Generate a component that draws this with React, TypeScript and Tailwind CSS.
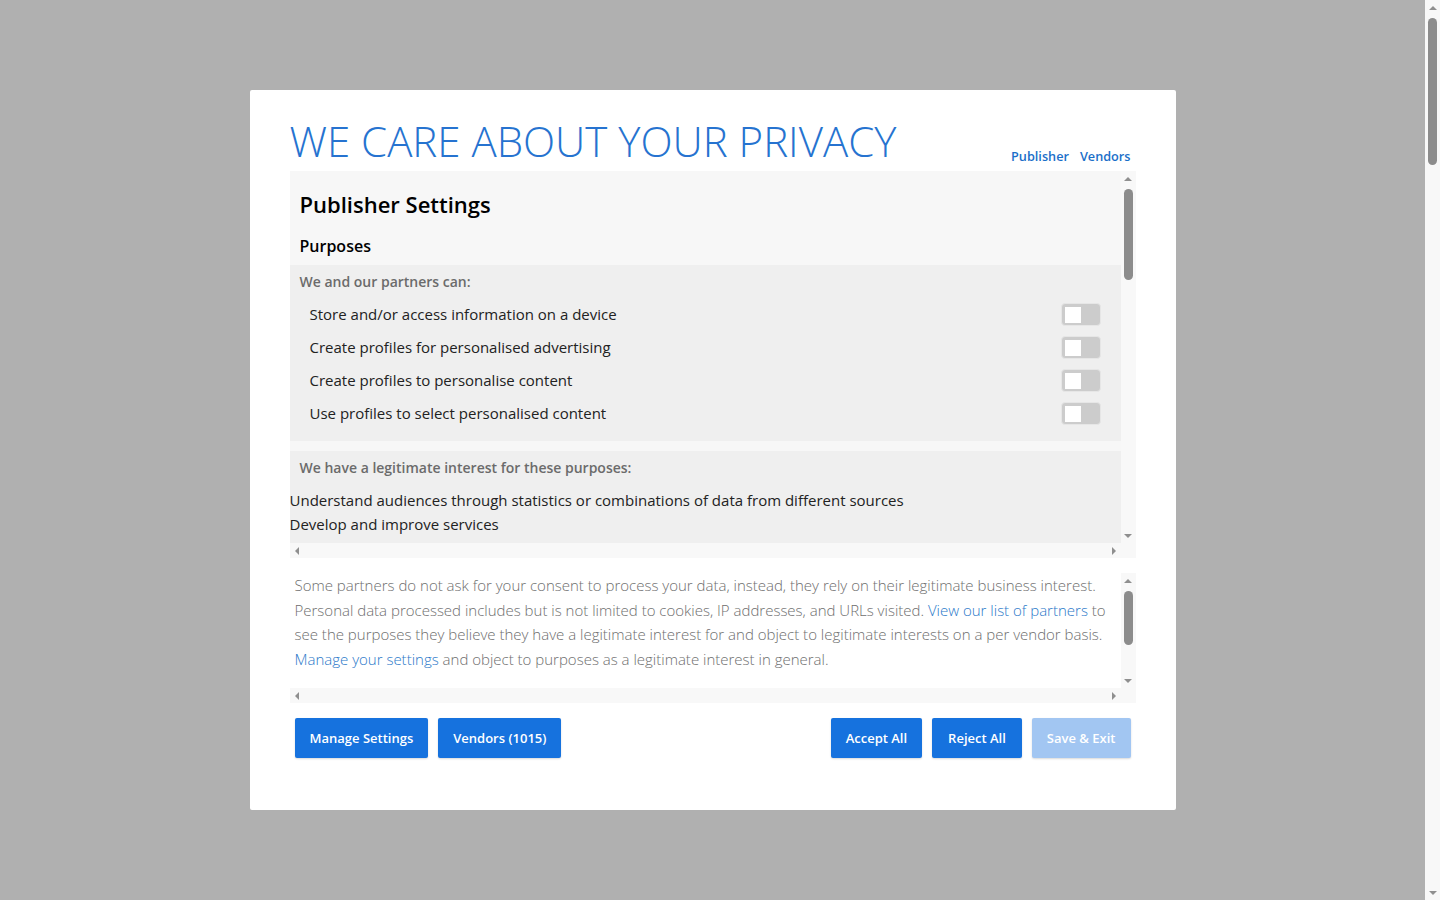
import React from 'react';

const purposes = [
  'Store and/or access information on a device',
  'Create profiles for personalised advertising',
  'Create profiles to personalise content',
  'Use profiles to select personalised content',
];

const legitimate = [
  'Understand audiences through statistics or combinations of data from different sources',
  'Develop and improve services',
  'Use limited data to select advertising',
  'Measure advertising performance',
  'Measure content performance',
];

// small scrollbar arrow triangle
const Arrow = ({ dir }: { dir: 'up' | 'down' | 'left' | 'right' }) => {
  const pts = {
    up: '0,4 4,0 8,4',
    down: '0,0 8,0 4,4',
    left: '4,0 4,8 0,4',
    right: '0,0 0,8 4,4',
  }[dir];
  const vert = dir === 'up' || dir === 'down';
  return (
    <svg width={vert ? 8 : 4} height={vert ? 4 : 8} viewBox={vert ? '0 0 8 4' : '0 0 4 8'}>
      <polygon points={pts} fill="#8f8f8f" />
    </svg>
  );
};

const VScroll = ({ top, size }: { top: number; size: number }) => (
  <div className="w-[15px] shrink-0 bg-[#f8f8f8] flex flex-col items-center">
    <div className="h-[15px] flex items-center justify-center">
      <Arrow dir="up" />
    </div>
    <div className="flex-1 w-full flex flex-col items-center">
      <div className="w-[9px] rounded-full bg-[#8c8c8c]" style={{ marginTop: top, height: size }} />
    </div>
    <div className="h-[15px] flex items-center justify-center">
      <Arrow dir="down" />
    </div>
  </div>
);

const HScroll = () => (
  <div className="h-[15px] flex shrink-0">
    <div className="flex-1 bg-[#f8f8f8] flex items-center justify-between px-[5px]">
      <Arrow dir="left" />
      <Arrow dir="right" />
    </div>
    <div className="w-[15px] bg-[#f8f8f8]" />
  </div>
);

const Toggle = () => (
  <div className="w-[40px] h-[23px] rounded-[4px] bg-[#cccccc] border border-[#e6e6e6] flex items-center pl-[3px]">
    <div className="w-[16px] h-[16px] bg-white" />
  </div>
);

const Btn = ({ label, disabled, wide }: { label: string; disabled?: boolean; wide?: boolean }) => (
  <button
    className={
      'h-[40px] pt-[2px] rounded-[2px] text-[13px] font-semibold text-white shadow-[0_1px_2px_rgba(0,0,0,0.15)] ' +
      (wide ? 'px-[16px] ' : 'px-[15px] ') +
      (disabled ? 'bg-[#a2c6f2]' : 'bg-[#1672de]')
    }
  >
    {label}
  </button>
);

export default function App() {
  return (
    <div className="h-[900px] flex overflow-hidden font-['Open_Sans',sans-serif]">
      <div className="flex-1 bg-[#b0b0b0] flex items-center justify-center">
        <div className="w-[926px] h-[720px] bg-white rounded-[2px] px-[40px] pt-[27px]">
          {/* Header */}
          <div className="flex items-end justify-between mb-[6px]">
            <h1 className="text-[42px] leading-[48px] font-light text-[#2673d0] whitespace-nowrap">
              WE CARE ABOUT YOUR PRIVACY
            </h1>
            <div className="flex gap-[11px] text-[12.7px] font-semibold text-[#1a6fc9] pr-[5px] mb-[-1px]">
              <a>Publisher</a>
              <a>Vendors</a>
            </div>
          </div>

          {/* Publisher settings */}
          <div className="h-[387px] flex flex-col bg-[#f7f7f7]">
            <div className="flex flex-1 min-h-0">
              <div className="flex-1 overflow-hidden">
                <h2 className="text-[22px] leading-[30px] font-semibold text-black pl-[10px] pt-[18px]">
                  Publisher Settings
                </h2>
                <h3 className="text-[16px] leading-[24px] font-semibold text-black pl-[10px] mt-[15px] mb-[7px]">
                  Purposes
                </h3>
                <div className="bg-[#efefef] pt-[7px] pb-[11px]">
                  <p className="text-[14px] leading-[20px] font-semibold text-[#6b6b6b] pl-[10px] mb-[6px]">
                    We and our partners can:
                  </p>
                  {purposes.map((p) => (
                    <div key={p} className="h-[33px] flex items-center justify-between pl-[20px] pr-[20px]">
                      <span className="text-[15px] text-[#222]">{p}</span>
                      <Toggle />
                    </div>
                  ))}
                </div>
                <div className="bg-[#efefef] mt-[10px] pt-[7px] pb-[12px]">
                  <p className="text-[14px] leading-[20px] font-semibold text-[#6b6b6b] pl-[10px] mb-[10px]">
                    We have a legitimate interest for these purposes:
                  </p>
                  {legitimate.map((p) => (
                    <div key={p} className="text-[15px] leading-[24px] text-[#222]">
                      {p}
                    </div>
                  ))}
                </div>
              </div>
              <VScroll top={3} size={91} />
            </div>
            <HScroll />
          </div>

          {/* Legitimate interest note */}
          <div className="h-[130px] flex flex-col mt-[15px] bg-white">
            <div className="flex flex-1 min-h-0">
              <div className="flex-1 overflow-hidden">
                <p className="text-[15px] leading-[24.7px] font-light text-[#6e6e6e] pl-[5px] pr-[2px]">
                  Some partners do not ask for your consent to process your data, instead, they rely on their
                  legitimate business interest. Personal data processed includes but is not limited to cookies, IP
                  addresses, and URLs visited. <a className="text-[#2a78c9]">View our list of partners</a> to see the
                  purposes they believe they have a legitimate interest for and object to legitimate interests on a
                  per vendor basis. <a className="text-[#2a78c9]">Manage your settings</a> and object to purposes as a
                  legitimate interest in general.
                </p>
              </div>
              <VScroll top={3} size={54} />
            </div>
            <HScroll />
          </div>

          {/* Buttons */}
          <div className="flex items-center justify-between mt-[15px] px-[5px]">
            <div className="flex gap-[10px]">
              <Btn label="Manage Settings" />
              <Btn label="Vendors (1015)" />
            </div>
            <div className="flex gap-[10px]">
              <Btn label="Accept All" />
              <Btn label="Reject All" wide />
              <Btn label="Save & Exit" disabled />
            </div>
          </div>
        </div>
      </div>

      {/* page scrollbar */}
      <VScroll top={3} size={147} />
    </div>
  );
}
